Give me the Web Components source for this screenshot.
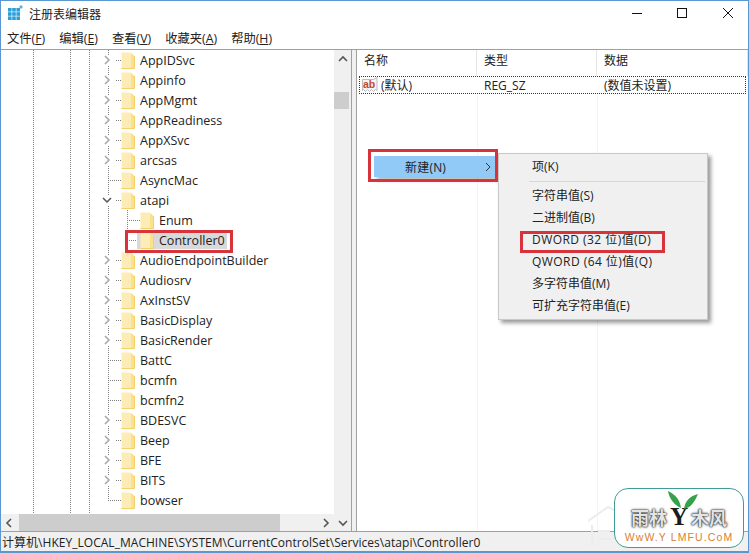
<!DOCTYPE html>
<html lang="zh">
<head>
<meta charset="utf-8">
<title>注册表编辑器</title>
<style>
  html, body { margin: 0; padding: 0; background: #fff; }
  body { font: 12px "Open Sans", "Noto Sans CJK SC", sans-serif; color: #1a1a1a; }
</style>
</head>
<body>
<reg-window>
  <reg-titlebar slot="title">注册表编辑器</reg-titlebar>
  <reg-menubar slot="menu"></reg-menubar>
  <reg-tree slot="tree"></reg-tree>
  <reg-list slot="list"></reg-list>
  <reg-statusbar slot="status">计算机\HKEY_LOCAL_MACHINE\SYSTEM\CurrentControlSet\Services\atapi\Controller0</reg-statusbar>
</reg-window>
<context-menu></context-menu>
<site-badge></site-badge>

<script>
class RegWindow extends HTMLElement {
  constructor() {
    super();
    this.attachShadow({mode: 'open'});
    this.shadowRoot.innerHTML = `
      <style>
        :host {
          display: grid;
          grid-template-rows: 26px 22px 1fr 19px;
          width: 749px;
          height: 553px;
          box-sizing: border-box;
          border: 1px solid #5a97d0;
          border-bottom-width: 2px;
          background: #fff;
          overflow: hidden;
        }
        .panes {
          display: grid;
          grid-template-columns: 351px 1fr;
          column-gap: 4px;
          border-top: 1px solid #a0a0a0;
          border-bottom: 1px solid #a0a0a0;
          background: #f0f0f0;
          min-height: 0;
        }
      </style>
      <slot name="title"></slot>
      <slot name="menu"></slot>
      <div class="panes">
        <slot name="tree"></slot>
        <slot name="list"></slot>
      </div>
      <slot name="status"></slot>
    `;
  }
}

class RegTitlebar extends HTMLElement {
  constructor() {
    super();
    this.attachShadow({mode: 'open'});
    this.shadowRoot.innerHTML = `
      <style>
        :host { display: flex; align-items: center; height: 26px; font-size: 12px; color: #222; }
        .logo { margin: 0 6px 0 6px; flex: none; }
        .title { flex: 1; }
        .btns { display: flex; }
        .btns svg { display: block; width: 46px; height: 26px; }
      </style>
      <svg class="logo" width="16" height="18" viewBox="0 0 16 18">
        <g fill="#2a9fd8">
          <rect x="1" y="3" width="3.6" height="3.6"/><rect x="5.2" y="3" width="3.6" height="3.6"/><rect x="9.4" y="3" width="3.6" height="3.6"/>
          <rect x="1" y="7.2" width="3.6" height="3.6"/><rect x="5.2" y="7.2" width="3.6" height="3.6"/><rect x="9.4" y="7.2" width="3.6" height="3.6"/>
          <rect x="1" y="11.4" width="3.6" height="3.6"/><rect x="5.2" y="11.4" width="3.6" height="3.6"/><rect x="9.4" y="11.4" width="3.6" height="3.6"/>
        </g>
        <path d="M14 0l2 2-2 2-2-2z" fill="#5bb4dc"/>
      </svg>
      <span class="title"><slot></slot></span>
      <div class="btns">
        <svg viewBox="0 0 46 26"><path d="M22 12.5h10" stroke="#111" fill="none"/></svg>
        <svg viewBox="0 0 46 26"><rect x="21.5" y="7.5" width="9" height="9" stroke="#111" fill="none"/></svg>
        <svg viewBox="0 0 46 26"><path d="M21 7l10 10M31 7L21 17" stroke="#111" fill="none"/></svg>
      </div>
    `;
  }
}

class RegMenubar extends HTMLElement {
  constructor() {
    super();
    this.attachShadow({mode: 'open'});
    const items = ['文件(F)', '编辑(E)', '查看(V)', '收藏夹(A)', '帮助(H)'];
    const html = items.map(t => {
      const m = t.match(/^(.*\()(.)(\))$/);
      return `<span>${m[1]}<u>${m[2]}</u>${m[3]}</span>`;
    }).join('');
    this.shadowRoot.innerHTML = `
      <style>
        :host { display: flex; align-items: center; height: 22px; padding-left: 6px; gap: 14px; font-size: 12.3px; color: #222; }
      </style>
      ${html}
    `;
  }
}

class TreeRow extends HTMLElement {
  constructor() {
    super();
    this.attachShadow({mode: 'open'});
  }
  connectedCallback() {
    const toggle = this.getAttribute('toggle') || 'none';
    const level = this.getAttribute('level') || '0';
    const chevrons = {
      right: '<path d="M4 1l4 4-4 4" fill="none" stroke="#a6a6a6" stroke-width="1.5"/>',
      down: '<path d="M2 3l4 4 4-4" fill="none" stroke="#555" stroke-width="1.5"/>'
    };
    const tog = chevrons[toggle]
      ? `<svg class="tog" viewBox="0 0 12 10">${chevrons[toggle]}</svg><span class="dots short"></span>`
      : '<span class="gap"></span><span class="dots"></span>';
    this.shadowRoot.innerHTML = `
      <style>
        :host {
          display: flex;
          align-items: center;
          height: 20px;
          padding-left: ${level === '1' ? 119 : 100}px;
          font-size: 12.5px;
          color: #222;
        }
        .tog { width: 12px; height: 10px; flex: none; background: #fff; }
        .gap { width: 7px; flex: none; }
        .dots { width: 13px; height: 1px; flex: none; background: repeating-linear-gradient(90deg, #808080 0 1px, transparent 1px 2px); }
        .dots.short { width: 5px; margin-left: 3px; }
        .item { display: flex; align-items: center; height: 18px; margin-left: -3px; padding: 0 2px 0 3px; }
        .item.sel { background: #d9d9d9; }
        .folder { flex: none; display: block; margin-right: 5px; }
      </style>
      ${tog}
      <div class="item ${this.hasAttribute('selected') ? 'sel' : ''}">
        <svg class="folder" width="14" height="17" viewBox="0 0 14 17">
          <path d="M.5 .5h9l3.5 3.5v12.5h-12.5z" fill="#fdecb6"/>
          <path d="M10 1v15.5h3.5V4z" fill="#fbe08e"/>
          <path d="M.5 16.5h13M13.5 4v12.5" stroke="#f4d06c"/>
        </svg>
        <span><slot></slot></span>
      </div>
    `;
  }
}

class RegScrollbar extends HTMLElement {
  constructor() {
    super();
    this.attachShadow({mode: 'open'});
  }
  connectedCallback() {
    const horizontal = this.getAttribute('dir') === 'h';
    const a = horizontal ? 'M6 1L2 5l4 4' : 'M1 6l4-4 4 4';
    const b = horizontal ? 'M4 1l4 4-4 4' : 'M1 4l4 4 4-4';
    this.shadowRoot.innerHTML = `
      <style>
        :host { display: flex; flex-direction: ${horizontal ? 'row' : 'column'}; background: #f0f0f0; min-height: 0; }
        .end { flex: none; ${horizontal ? 'width: 18px' : 'height: 20px'}; display: flex; align-items: center; justify-content: center; }
        .end.last { ${horizontal ? 'width: 19px' : 'height: 18px'}; }
        .track { flex: 1; display: flex; flex-direction: ${horizontal ? 'row' : 'column'}; padding: ${horizontal ? '0' : '22px 2px 0 0'}; }
        .thumb { background: #cdcdcd; flex: none; ${horizontal ? 'width: 261px' : 'height: 17px'}; }
        svg { width: 10px; height: 10px; }
      </style>
      <div class="end"><svg viewBox="0 0 10 10"><path d="${a}" fill="none" stroke="#555" stroke-width="1.6"/></svg></div>
      <div class="track"><div class="thumb"></div></div>
      <div class="end last"><svg viewBox="0 0 10 10"><path d="${b}" fill="none" stroke="#555" stroke-width="1.6"/></svg></div>
    `;
  }
}

class RegTree extends HTMLElement {
  constructor() {
    super();
    this.attachShadow({mode: 'open'});
    const rows = [
      ['AppIDSvc', 'right'], ['Appinfo', 'right'], ['AppMgmt', 'right'], ['AppReadiness', 'right'],
      ['AppXSvc', 'right'], ['arcsas', 'right'], ['AsyncMac', 'none'], ['atapi', 'down'],
      ['Enum', 'none', 1], ['Controller0', 'none', 1, true],
      ['AudioEndpointBuilder', 'right'], ['Audiosrv', 'right'], ['AxInstSV', 'right'], ['BasicDisplay', 'right'],
      ['BasicRender', 'right'], ['BattC', 'none'], ['bcmfn', 'none'], ['bcmfn2', 'none'], ['BDESVC', 'right'],
      ['Beep', 'right'], ['BFE', 'right'], ['BITS', 'right'], ['bowser', 'none']
    ];
    const html = rows.map(([name, toggle, level, sel]) =>
      `<tree-row toggle="${toggle}" level="${level || 0}" ${sel ? 'selected' : ''}>${name}</tree-row>`).join('');
    const dots = 'repeating-linear-gradient(180deg, #808080 0 1px, transparent 1px 2px)';
    this.shadowRoot.innerHTML = `
      <style>
        :host {
          display: grid;
          grid-template-columns: 333px 17px;
          grid-template-rows: 1fr 17px;
          background: #fff;
          border-right: 1px solid #a0a0a0;
          min-height: 0;
          overflow: hidden;
        }
        .rows {
          overflow: hidden;
          min-height: 0;
          background-image: ${dots}, ${dots}, ${dots}, ${dots}, ${dots};
          background-size: 1px 100%, 1px 100%, 1px 100%, 1px 451px, 1px 31px;
          background-position: 32px 0, 69px 0, 88px 0, 107px 0, 126px 160px;
          background-repeat: no-repeat;
        }
        reg-scrollbar:not([dir]) { grid-row: 1 / 3; grid-column: 2; }
      </style>
      <div class="rows">${html}</div>
      <reg-scrollbar></reg-scrollbar>
      <reg-scrollbar dir="h"></reg-scrollbar>
    `;
  }
}

class RegList extends HTMLElement {
  constructor() {
    super();
    this.attachShadow({mode: 'open'});
    this.shadowRoot.innerHTML = `
      <style>
        :host { display: flex; flex-direction: column; background: #fff; border-left: 1px solid #a0a0a0; font-size: 12px; color: #222; min-height: 0; }
        .head { display: grid; grid-template-columns: 120px 120px 1fr; height: 26px; }
        .head span { padding-left: 7px; border-right: 1px solid #e5e5e5; height: 26px; line-height: 22px; }
        .row { display: grid; grid-template-columns: 119px 120px 1fr; height: 18px; align-items: center; margin-left: 2px; outline: 1px dotted #333; outline-offset: -1px; width: 387px; }
        .name { display: flex; align-items: center; gap: 3px; padding-left: 3px; }
        .row > span { padding-left: 6px; }
        .rest { flex: 1; position: relative; }
        .rest i { position: absolute; top: 0; bottom: 0; width: 1px; background: #f4f4f4; }
      </style>
      <div class="head"><span>名称</span><span>类型</span><span>数据</span></div>
      <div class="row">
        <div class="name">
          <svg width="16" height="17" viewBox="0 0 16 17">
            <path d="M.5 2.5h11l3.5-2v13l-1.5-1-2 2-2-2-2 2-2-2-2 2-2-2-1 1z" fill="#f4f4f4" stroke="#bcbcbc"/>
            <text x="1" y="11" font-family="'Liberation Sans', sans-serif" font-weight="700" font-size="10.5" fill="#c0492c">ab</text>
          </svg>
          <span>(默认)</span>
        </div>
        <span>REG_SZ</span>
        <span>(数值未设置)</span>
      </div>
      <div class="rest"><i style="left:120px"></i><i style="left:240px"></i></div>
    `;
  }
}

class RegStatusbar extends HTMLElement {
  constructor() {
    super();
    this.attachShadow({mode: 'open'});
    this.shadowRoot.innerHTML = `
      <style>
        :host { display: flex; align-items: center; height: 19px; padding-left: 1px; font-size: 12px; letter-spacing: .03px; color: #222; background: #f0f0f0; white-space: nowrap; overflow: hidden; }
      </style>
      <slot></slot>
    `;
  }
}

class ContextMenu extends HTMLElement {
  constructor() {
    super();
    this.attachShadow({mode: 'open'});
    this.shadowRoot.innerHTML = `
      <style>
        :host { position: absolute; left: 0; top: 0; font-size: 12px; color: #222; }
        .new {
          position: absolute; left: 374px; top: 156px; width: 122px; height: 21px;
          background: #91c9f7; box-shadow: 3px 3px 4px rgba(0,0,0,.3);
          display: flex; align-items: center; box-sizing: border-box; padding-left: 31px;
          letter-spacing: .2px;
        }
        .new svg { position: absolute; right: 4px; top: 6px; }
        .pop {
          position: absolute; left: 498px; top: 153px; width: 210px; height: 167px;
          box-sizing: border-box; background: #f0f0f0; border: 1px solid #c8c8c8;
          box-shadow: 3px 3px 4px rgba(0,0,0,.4); padding-top: 2px;
        }
        .it { height: 22px; line-height: 22px; padding-left: 33px; }
        .it.wide { letter-spacing: .45px; }
        hr { border: 0; border-top: 1px solid #d7d7d7; margin: 3px 2px 3px 30px; }
        .mark { position: absolute; border: 3px solid #d8333a; box-sizing: border-box; pointer-events: none; }
      </style>
      <div class="new">新建(N)<svg width="8" height="10" viewBox="0 0 8 10"><path d="M2 1l4 4-4 4" fill="none" stroke="#333"/></svg></div>
      <div class="pop">
        <div class="it">项(K)</div>
        <hr>
        <div class="it">字符串值(S)</div>
        <div class="it">二进制值(B)</div>
        <div class="it wide">DWORD (32 位)值(D)</div>
        <div class="it wide">QWORD (64 位)值(Q)</div>
        <div class="it">多字符串值(M)</div>
        <div class="it">可扩充字符串值(E)</div>
      </div>
      <div class="mark" style="left:368px;top:149px;width:130px;height:33px"></div>
      <div class="mark" style="left:520px;top:231px;width:145px;height:22px"></div>
      <div class="mark" style="left:125px;top:230px;width:108px;height:23px"></div>
    `;
  }
}

class SiteBadge extends HTMLElement {
  constructor() {
    super();
    this.attachShadow({mode: 'open'});
    this.shadowRoot.innerHTML = `
      <style>
        :host {
          position: absolute; left: 614px; top: 488px; width: 130px; height: 60px;
          box-sizing: border-box; border: 1px solid #3f9c97; border-radius: 14px;
          background: #fff;
          display: flex; flex-direction: column; align-items: center;
          padding-top: 17px;
        }
        svg { position: absolute; }
        .sprout { left: 52px; top: 1px; }
        .house { left: -27px; top: 14px; }
        .name { font: 700 18px "Noto Sans CJK SC", sans-serif; line-height: 22px; color: #e4e4e4; display: flex; gap: 2px; text-shadow: 0 0 1px #222, 0 0 2px #333, 0 0 3px #666; }
        .y { color: #1c1c1c; font: 700 25px "Liberation Serif", serif; line-height: 22px; width: 20px; text-align: center; text-shadow: none; }
        .url { font: 10.5px "Liberation Sans", sans-serif; color: #d9812f; letter-spacing: 1.1px; line-height: 14px; margin-top: 2px; }
      </style>
      <svg class="house" width="26" height="44" viewBox="0 0 26 44">
        <path d="M0 18L20 4l6 3M4 22v20M10 28h12M10 36h14" fill="none" stroke="#ececec" stroke-width="2"/>
      </svg>
      <svg class="sprout" width="32" height="20" viewBox="0 0 32 20">
        <path d="M14 18C13 10 9 5 1 1c1 7 6 14 13 17zM17 19c1-8 6-13 14-15-3 7-7 14-14 15z" fill="#36a24a"/>
      </svg>
      <div class="name"><span>雨林</span><span class="y">Y</span><span>木风</span></div>
      <div class="url">WwW.Y LMFU.CoM</div>
    `;
  }
}

customElements.define('reg-window', RegWindow);
customElements.define('reg-titlebar', RegTitlebar);
customElements.define('reg-menubar', RegMenubar);
customElements.define('tree-row', TreeRow);
customElements.define('reg-scrollbar', RegScrollbar);
customElements.define('reg-tree', RegTree);
customElements.define('reg-list', RegList);
customElements.define('reg-statusbar', RegStatusbar);
customElements.define('context-menu', ContextMenu);
customElements.define('site-badge', SiteBadge);
</script>
</body>
</html>
